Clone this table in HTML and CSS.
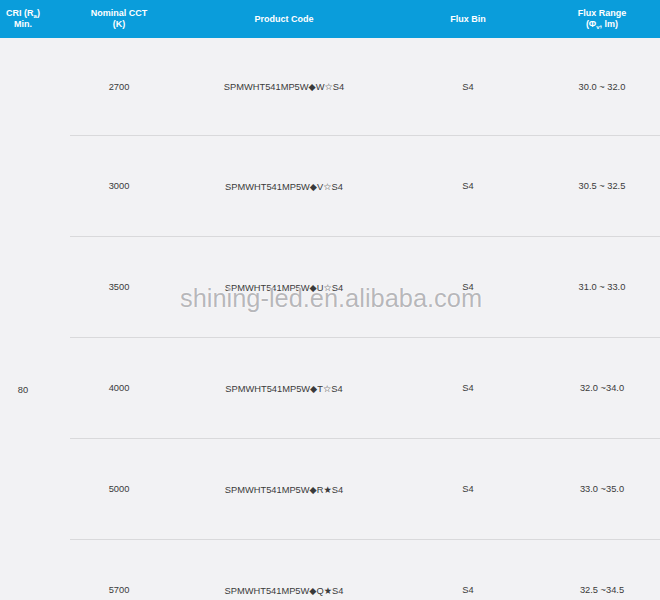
FILE: index.html
```html
<!DOCTYPE html>
<html lang="en">
<head>
    <meta charset="UTF-8">
    <meta name="viewport" content="width=device-width, initial-scale=1.0">
    <title>SPMWHT541MP5 - Product Codes</title>
    <link rel="stylesheet" href="styles.css">
</head>
<body>
    <div class="spec-wrap">
        <table class="spec-table">
            <colgroup>
                <col class="col-cri">
                <col class="col-cct">
                <col class="col-code">
                <col class="col-bin">
                <col class="col-range">
            </colgroup>
            <thead>
                <tr>
                    <th class="cri">CRI (R<sub>a</sub>)<br>Min.</th>
                    <th>Nominal CCT<br>(K)</th>
                    <th>Product Code</th>
                    <th>Flux Bin</th>
                    <th>Flux Range<br>(&Phi;<sub>v</sub>, lm)</th>
                </tr>
            </thead>
            <tbody>
                <tr>
                    <td class="cri" rowspan="7">80</td>
                    <td>2700</td>
                    <td>SPMWHT541MP5W&#9670;W&#9734;S4</td>
                    <td>S4</td>
                    <td>30.0 ~ 32.0</td>
                </tr>
                <tr>
                    <td>3000</td>
                    <td>SPMWHT541MP5W&#9670;V&#9734;S4</td>
                    <td>S4</td>
                    <td>30.5 ~ 32.5</td>
                </tr>
                <tr>
                    <td>3500</td>
                    <td>SPMWHT541MP5W&#9670;U&#9734;S4</td>
                    <td>S4</td>
                    <td>31.0 ~ 33.0</td>
                </tr>
                <tr>
                    <td>4000</td>
                    <td>SPMWHT541MP5W&#9670;T&#9734;S4</td>
                    <td>S4</td>
                    <td>32.0 ~34.0</td>
                </tr>
                <tr>
                    <td>5000</td>
                    <td>SPMWHT541MP5W&#9670;R&#9733;S4</td>
                    <td>S4</td>
                    <td>33.0 ~35.0</td>
                </tr>
                <tr>
                    <td>5700</td>
                    <td>SPMWHT541MP5W&#9670;Q&#9733;S4</td>
                    <td>S4</td>
                    <td>32.5 ~34.5</td>
                </tr>
                <tr>
                    <td>6500</td>
                    <td>SPMWHT541MP5W&#9670;P&#9733;S4</td>
                    <td>S4</td>
                    <td>32.5 ~34.5</td>
                </tr>
            </tbody>
        </table>
        <div class="watermark">shining-led.en.alibaba.com</div>
    </div>
</body>
</html>
```

FILE: styles.css
```css
body {
    margin: 0;
    padding: 0;
    height: 600px;
    overflow: hidden;
    background-color: #f2f2f4;
    font-family: "Liberation Sans", Arial, "DejaVu Sans", sans-serif;
    color: #3a3a3a;
}

.spec-wrap {
    position: relative;
    width: 668px;
}

.spec-table {
    width: 668px;
    border-collapse: collapse;
    table-layout: fixed;
}

.col-cri {
    width: 70px;
}

.col-cct {
    width: 98px;
}

.col-code {
    width: 232px;
}

.col-bin {
    width: 136px;
}

.col-range {
    width: 132px;
}

.spec-table th {
    height: 38px;
    padding: 0;
    background-color: #0a9ddb;
    color: #fff;
    font-size: 9px;
    font-weight: 700;
    line-height: 11px;
    text-align: center;
    vertical-align: middle;
}

.spec-table sub {
    font-size: 6px;
    line-height: 0;
    vertical-align: -2px;
}

.spec-table td {
    height: 100px;
    padding: 0;
    font-size: 9.3px;
    text-align: center;
    vertical-align: middle;
    border-bottom: 1px solid #d9d9db;
}

.spec-table tbody tr:first-child td {
    height: 97px;
}

.spec-table th.cri,
.spec-table td.cri {
    padding-right: 24px;
    border-bottom: none;
}

.watermark {
    position: absolute;
    top: 284px;
    left: 0;
    width: 662px;
    text-align: center;
    font-size: 25.4px;
    color: rgba(160, 160, 164, 0.75);
    text-shadow: 0 0 2px #fff, 0 0 1px #fff;
    pointer-events: none;
}
```
